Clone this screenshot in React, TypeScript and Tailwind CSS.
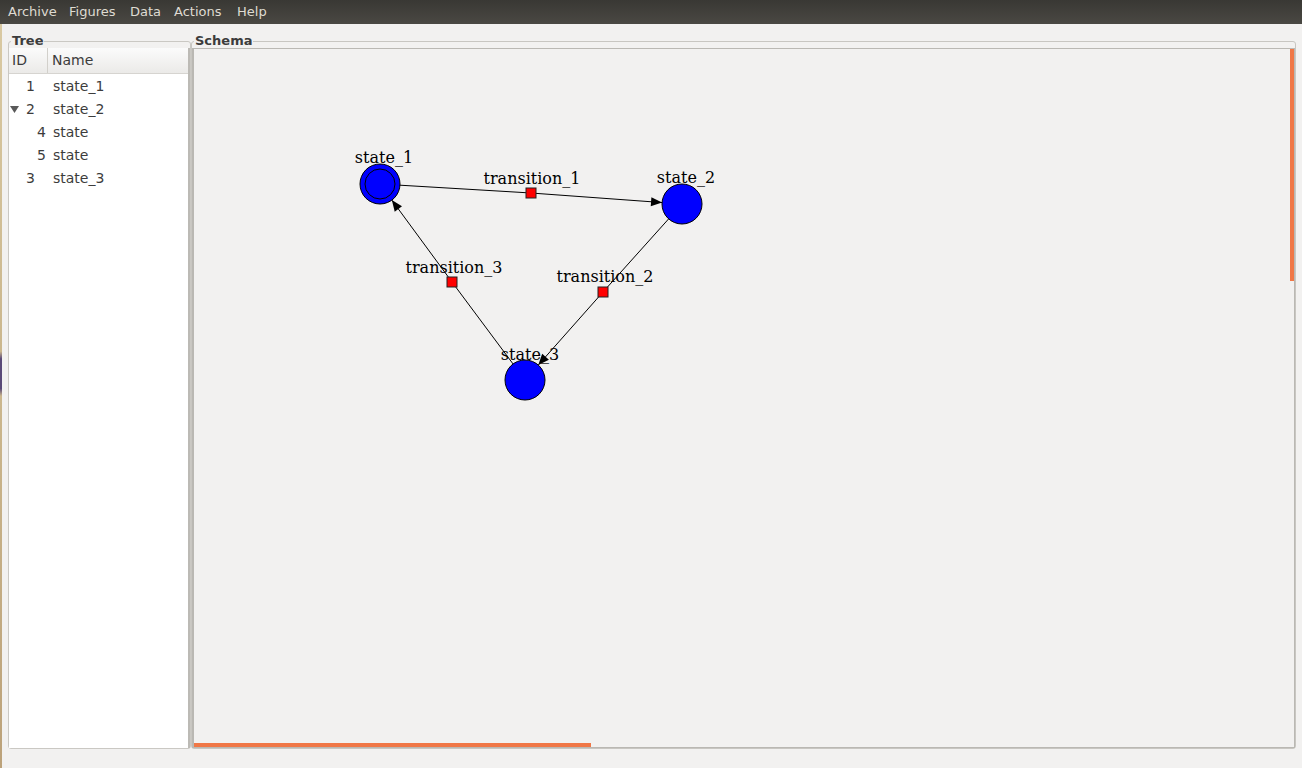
import React from "react"

const menus = [
  { label: "Archive", w: "w-[61px]" },
  { label: "Figures", w: "w-[61px]" },
  { label: "Data", w: "w-[44px]" },
  { label: "Actions", w: "w-[63px]" },
  { label: "Help", w: "w-[50px]" },
]

const rows = [
  { id: "1", name: "state_1", child: false, open: false },
  { id: "2", name: "state_2", child: false, open: true },
  { id: "4", name: "state", child: true, open: false },
  { id: "5", name: "state", child: true, open: false },
  { id: "3", name: "state_3", child: false, open: false },
]

type Pt = [number, number]

// arrowhead polygon with tip at `tip`, pointing along from->tip
function arrow(from: Pt, tip: Pt) {
  const dx = tip[0] - from[0]
  const dy = tip[1] - from[1]
  const len = Math.hypot(dx, dy)
  const ux = dx / len
  const uy = dy / len
  const bx = tip[0] - ux * 11
  const by = tip[1] - uy * 11
  const px = -uy * 4.5
  const py = ux * 4.5
  return `${tip[0]},${tip[1]} ${bx + px},${by + py} ${bx - px},${by - py}`
}

function edgeTip(from: Pt, center: Pt, r: number): Pt {
  const dx = center[0] - from[0]
  const dy = center[1] - from[1]
  const len = Math.hypot(dx, dy)
  return [center[0] - (dx / len) * r, center[1] - (dy / len) * r]
}

const s1: Pt = [380, 183]
const s2: Pt = [682, 203]
const s3: Pt = [525, 379]
const t1: Pt = [531, 192]
const t2: Pt = [603, 291]
const t3: Pt = [452, 281]

const edges: [Pt, Pt, Pt][] = [
  [s1, t1, s2],
  [s2, t2, s3],
  [s3, t3, s1],
]

const states = [
  { c: s1, name: "state_1", lx: 384, ly: 162, start: true },
  { c: s2, name: "state_2", lx: 686, ly: 182, start: false },
  { c: s3, name: "state_3", lx: 530, ly: 359, start: false },
]

const transitions = [
  { c: t1, name: "transition_1", lx: 532, ly: 183 },
  { c: t2, name: "transition_2", lx: 605, ly: 281 },
  { c: t3, name: "transition_3", lx: 454, ly: 272 },
]

function Diagram() {
  return (
    <svg className="block h-full w-full" style={{ fontFamily: '"DejaVu Serif", serif' }}>
      <g transform="translate(-194,-48)">
        {edges.map(([a, m, b], i) => {
          const tip = edgeTip(m, b, 20)
          return (
            <g key={i}>
              <line x1={a[0]} y1={a[1]} x2={m[0]} y2={m[1]} stroke="#000" strokeWidth="1" />
              <line x1={m[0]} y1={m[1]} x2={tip[0]} y2={tip[1]} stroke="#000" strokeWidth="1" />
              <polygon points={arrow(m, tip)} fill="#000" />
            </g>
          )
        })}
        {states.map((s) => (
          <g key={s.name}>
            <circle cx={s.c[0]} cy={s.c[1]} r="20" fill="#0000ff" stroke="#000" strokeWidth="1" />
            {s.start && <circle cx={s.c[0]} cy={s.c[1]} r="15" fill="none" stroke="#000" strokeWidth="1" />}
            <text x={s.lx} y={s.ly} textAnchor="middle" fontSize="16" fill="#000">
              {s.name}
            </text>
          </g>
        ))}
        {transitions.map((t) => (
          <g key={t.name}>
            <rect x={t.c[0] - 5} y={t.c[1] - 5} width="10" height="10" fill="#ff0000" stroke="#222" strokeWidth="1" />
            <text x={t.lx} y={t.ly} textAnchor="middle" fontSize="16" fill="#000">
              {t.name}
            </text>
          </g>
        ))}
      </g>
    </svg>
  )
}

export default function App() {
  return (
    <div
      className="flex h-[768px] w-[1302px] flex-col overflow-hidden bg-[#f2f1f0] text-[#3c3c3c]"
      style={{ fontFamily: '"DejaVu Sans", sans-serif' }}
    >
      {/* menu bar */}
      <div className="flex h-6 shrink-0 items-center bg-[linear-gradient(#393834,#4a4843)] pl-2 text-[13px] text-[#dfdbd2]">
        {menus.map((m) => (
          <div key={m.label} className={m.w}>
            {m.label}
          </div>
        ))}
      </div>

      <div className="flex flex-1">
        <div className="w-[2px] bg-[linear-gradient(#d9c9a2_0%,#cbb78e_44%,#5a4a78_45%,#5a4a78_49%,#cbb78e_50%,#bca27a_100%)]" />
        <div className="flex flex-1 pl-[6px] pt-[10px]">
          {/* Tree frame */}
          <fieldset className="h-[715px] w-[183px] min-w-0 rounded-[3px] border border-[#cac8c3]">
            <legend className="ml-[2px] px-[1px] text-[13px] leading-[14px] font-bold text-[#3c3c3c]">Tree</legend>
            <div className="h-full border-r-2 border-[#bcbab5] bg-white text-[14px]">
              <div className="flex h-[26px] items-center border-b border-[#d6d4d0] bg-[linear-gradient(#fbfbfb,#ebeae8)]">
                <div className="flex h-full w-[39px] items-center border-r border-[#d2d0cb] pl-[3px]">ID</div>
                <div className="pl-[4px]">Name</div>
              </div>
              <div className="pt-[1px]">
                {rows.map((r) => (
                  <div key={r.id} className="flex h-[23px] items-center">
                    <div className="flex w-[39px] items-center">
                      <div className="flex w-[11px] justify-center">
                        {r.open && (
                          <svg width="9" height="7" viewBox="0 0 9 7">
                            <polygon points="0,0 9,0 4.5,7" fill="#5a5a5a" />
                          </svg>
                        )}
                      </div>
                      <div className={r.child ? "pl-[17px]" : "pl-[6px]"}>{r.id}</div>
                    </div>
                    <div className="pl-[5px]">{r.name}</div>
                  </div>
                ))}
              </div>
            </div>
          </fieldset>

          {/* Schema frame */}
          <fieldset className="h-[715px] w-[1105px] min-w-0 rounded-[3px] border border-[#c8c6c1]">
            <legend className="ml-[2px] px-[1px] text-[13px] leading-[14px] font-bold text-[#3c3c3c]">Schema</legend>
            <div className="relative h-full border-l-2 border-t border-b border-r border-[#bab8b3] bg-[#f2f1f0]">
              <Diagram />
              <div className="absolute right-0 top-0 h-[232px] w-[4px] bg-[#f07746]" />
              <div className="absolute bottom-0 left-0 h-[4px] w-[397px] bg-[#f07746]" />
            </div>
          </fieldset>
        </div>
      </div>
    </div>
  )
}
